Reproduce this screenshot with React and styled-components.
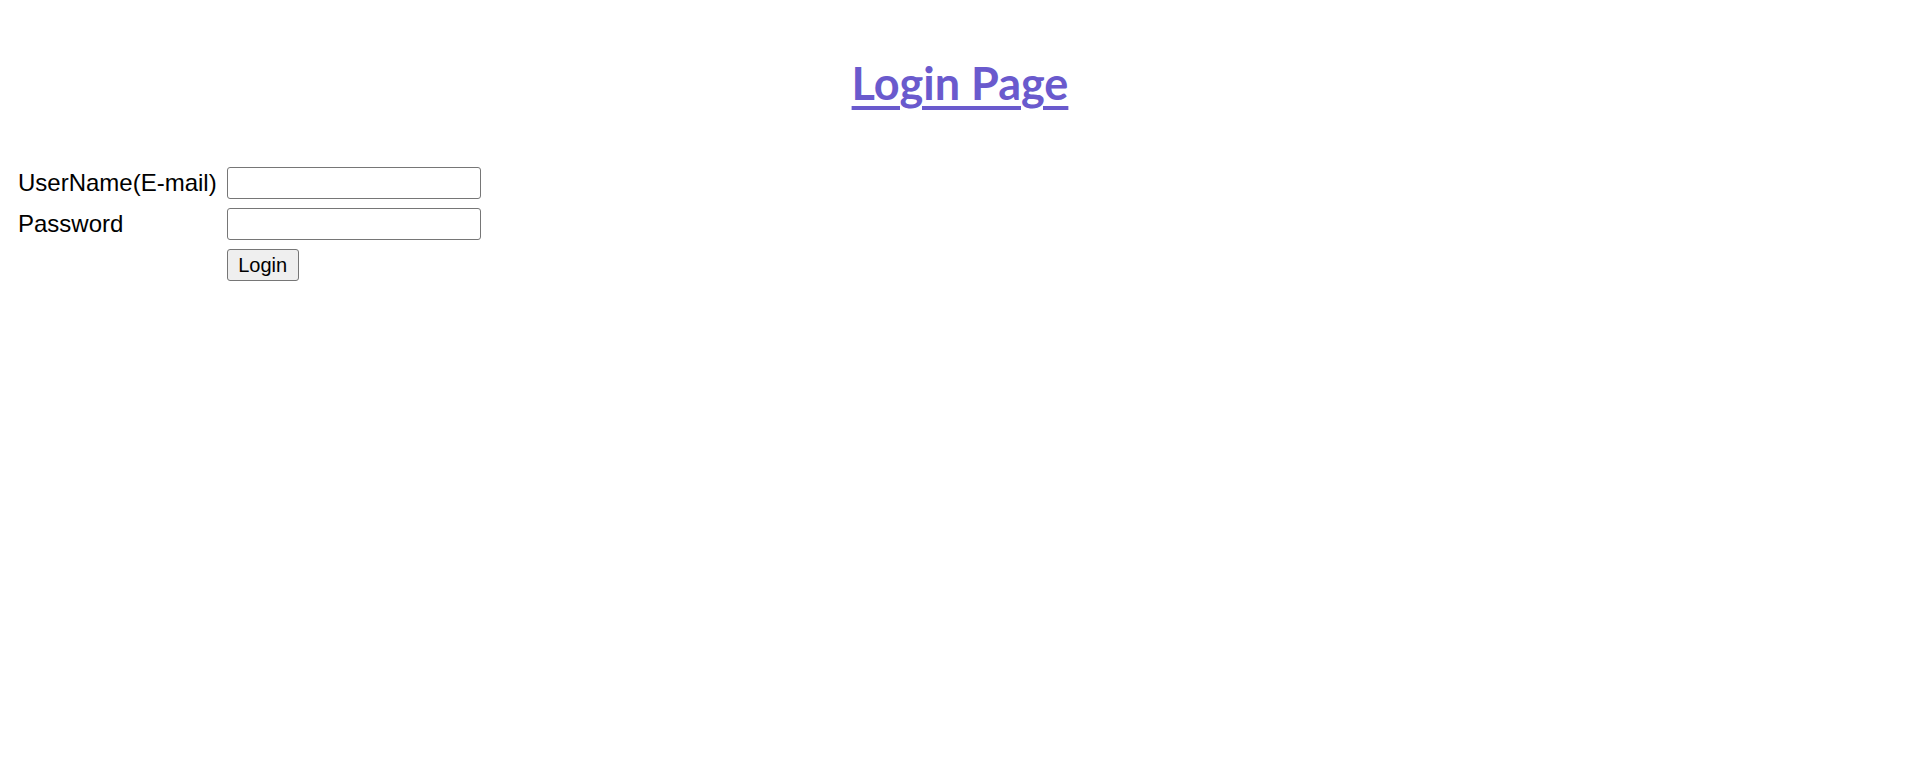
import React from "react";
import styled, { createGlobalStyle } from "styled-components";

const GlobalStyle = createGlobalStyle`
  body {
    margin: 12px;
    background: #ffffff;
    font-family: "Liberation Sans", Arial, sans-serif;
    color: #000000;
  }
`;

const App = () => {
  return (
    <>
      <GlobalStyle />
      <Page>
        <Title>Login Page</Title>
        <Form onSubmit={(e) => e.preventDefault()}>
          <Label htmlFor="user">UserName(E-mail)</Label>
          <Input id="user" type="text" />
          <Label htmlFor="pass">Password</Label>
          <Input id="pass" type="password" />
          <span />
          <Button type="submit">Login</Button>
        </Form>
      </Page>
    </>
  );
};

export default App;

const Page = styled("div")`
  display: flex;
  flex-direction: column;
`;

const Title = styled("h1")`
  margin: 42px 0 0;
  height: 113px;
  text-align: center;
  font-family: Lato, "Open Sans", sans-serif;
  font-size: 45px;
  font-weight: 700;
  line-height: 58px;
  color: #6a5acd;
  text-decoration: underline;
  text-decoration-thickness: 4px;
  text-underline-offset: 6px;
`;

const Form = styled("form")`
  display: grid;
  grid-template-columns: auto 254px;
  grid-auto-rows: auto;
  column-gap: 10px;
  row-gap: 9px;
  align-items: center;
  justify-content: start;
  padding-left: 6px;
  width: max-content;
`;

const Label = styled("label")`
  font-size: 24px;
  line-height: 28px;
`;

const Input = styled("input")`
  box-sizing: border-box;
  width: 254px;
  height: 32px;
  border: 1px solid #767676;
  border-radius: 3px;
  padding: 1px 3px;
  font-size: 20px;
  background: #ffffff;
`;

const Button = styled("button")`
  box-sizing: border-box;
  justify-self: start;
  width: 72px;
  height: 32px;
  border: 1px solid #767676;
  border-radius: 3px;
  background: #efefef;
  font-family: "Liberation Sans", Arial, sans-serif;
  font-size: 20px;
  color: #000000;
  padding: 0;
`;
